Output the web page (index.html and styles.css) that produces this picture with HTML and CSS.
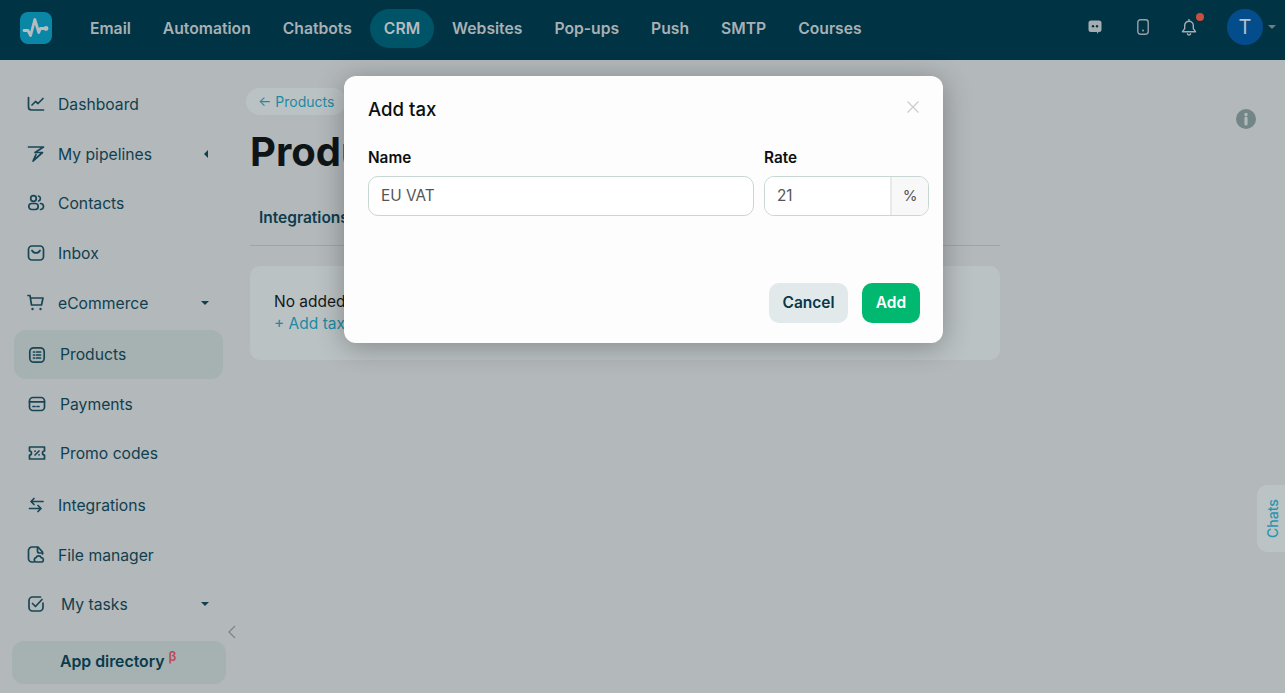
FILE: index.html
```html
<!DOCTYPE html>
<html lang="en">
<head>
<meta charset="utf-8">
<title>Products - Add tax</title>
<link rel="stylesheet" href="styles.css">
</head>
<body>
<header class="topbar">
  <a class="logo" href="#">
    <svg viewBox="0 0 32 32" width="32" height="32"><path d="M4 18.5h4l2.600 5 4.200-16 4 13 1.600-4h5.600" fill="none" stroke="#b4bcc0" stroke-width="2.800" stroke-linecap="round" stroke-linejoin="round"/><circle cx="26" cy="16.500" r="2.400" fill="#b4bcc0"/></svg>
  </a>
  <nav class="topnav">
    <a href="#">Email</a>
    <a href="#">Automation</a>
    <a href="#">Chatbots</a>
    <a href="#" class="current">CRM</a>
    <a href="#">Websites</a>
    <a href="#">Pop-ups</a>
    <a href="#">Push</a>
    <a href="#">SMTP</a>
    <a href="#">Courses</a>
  </nav>
  <div class="topicons">
    <svg class="ico-chat" viewBox="0 0 14 15" width="14" height="15"><path d="M3 0.5h8a2.5 2.5 0 0 1 2.5 2.5v6.5a2.5 2.5 0 0 1-2.5 2.5h-0.500l-1.500 2v-2h-6a2.500 2.500 0 0 1-2.500-2.500v-6.500a2.500 2.500 0 0 1 2.500-2.500z" fill="#a5adb1"/><circle cx="5" cy="6.200" r="1.200" fill="#003344"/><circle cx="9" cy="6.200" r="1.200" fill="#003344"/></svg>
    <svg class="ico-phone" viewBox="0 0 12 16" width="12" height="16"><rect x="0.800" y="0.800" width="10.400" height="14.400" rx="2.600" fill="none" stroke="#97a3a8" stroke-width="1.400"/><circle cx="6" cy="11.600" r="1" fill="#97a3a8"/></svg>
    <span class="bell">
      <svg viewBox="0 0 16 17" width="16" height="17"><path d="M8 2.200a4.300 4.300 0 0 0-4.300 4.300v3.200l-2.200 3h13l-2.200-3v-3.200a4.300 4.300 0 0 0-4.300-4.300zM8 0.600v1.600M6.400 14.800a1.700 1.700 0 0 0 3.200 0" fill="none" stroke="#a5adb1" stroke-width="1.400" stroke-linejoin="round" stroke-linecap="round"/></svg>
      <i class="dot"></i>
    </span>
    <span class="avatar">T</span>
    <i class="caret-grey"></i>
  </div>
</header>

<div class="page">
  <aside class="sidebar">
    <a class="side-item" href="#">
      <svg viewBox="0 0 18 18" width="18" height="18"><path d="M1.500 2.500v9.500a3 3 0 0 0 3 3h12M5 10l3.500-3.500 2.500 2 5-5" /></svg>
      <span>Dashboard</span>
    </a>
    <a class="side-item" href="#">
      <svg viewBox="0 0 18 18" width="18" height="18"><path d="M1.500 2h15l-8.500 5.500h7.500l-9.500 8.500 3-6.500" /></svg>
      <span>My pipelines</span>
      <i class="caret-left"></i>
    </a>
    <a class="side-item up" href="#">
      <svg viewBox="0 0 18 18" width="18" height="18"><circle cx="6.500" cy="4.500" r="2.800"/><rect x="1.800" y="9.500" width="9.400" height="6" rx="3"/><path d="M11.500 2a2.600 2.600 0 0 1 0 5M13.500 9.500a3 3 0 0 1 0 6" /></svg>
      <span>Contacts</span>
    </a>
    <a class="side-item" href="#">
      <svg viewBox="0 0 18 18" width="18" height="18"><rect x="1.500" y="2" width="15" height="14" rx="3.500"/><path d="M5 6.500a4.500 4.500 0 0 0 8 0" /></svg>
      <span>Inbox</span>
    </a>
    <a class="side-item" href="#">
      <svg viewBox="0 0 18 18" width="18" height="18"><path d="M1 1.500h2l1.500 9.500h10l1.500-7h-12.500" /><circle cx="5.500" cy="15" r="1.200" fill="#184656" stroke="none"/><circle cx="13.500" cy="15" r="1.200" fill="#184656" stroke="none"/></svg>
      <span>eCommerce</span>
      <i class="caret-down"></i>
    </a>
    <a class="side-item sub active" href="#">
      <svg viewBox="0 0 18 18" width="18" height="18"><rect x="1.800" y="1.800" width="14.400" height="14.400" rx="4"/><path d="M5.500 6h1M8.500 6h4M5.500 9h1M8.500 9h4M5.500 12h1M8.500 12h4" /></svg>
      <span>Products</span>
    </a>
    <a class="side-item sub" href="#">
      <svg viewBox="0 0 18 18" width="18" height="18"><rect x="1.500" y="2.500" width="15" height="13" rx="3.500"/><path d="M1.500 6.800h15M5 11.500h2M9 11.500h2" /></svg>
      <span>Payments</span>
    </a>
    <a class="side-item sub up" href="#">
      <svg viewBox="0 0 18 18" width="18" height="18"><path d="M1.500 3h15v4a2 2 0 0 0 0 4v4h-15v-4a2 2 0 0 0 0-4z" stroke-linejoin="round"/><path d="M11 7l-4 4M7 7.200h.1M11 10.800h.1" /></svg>
      <span>Promo codes</span>
    </a>
    <a class="side-item down" href="#">
      <svg viewBox="0 0 18 18" width="18" height="18"><path d="M16 5.500h-11M7 2.500l-3 3 3 3M2.500 12.500h11M11 9.500l3 3-3 3" /></svg>
      <span>Integrations</span>
    </a>
    <a class="side-item" href="#">
      <svg viewBox="0 0 18 18" width="18" height="18"><path d="M7 16h-2a3.500 3.500 0 0 1-3.500-3.500v-8a3.500 3.500 0 0 1 3.500-3.500h6l4.500 5v2" /><path d="M10.500 1.500v3.500a2 2 0 0 0 2 2h3" /><path d="M9 16a2.200 2.200 0 0 1 0-4.300 2.800 2.800 0 0 1 5.300 0 2.200 2.200 0 0 1 .5 4.300z" /></svg>
      <span>File manager</span>
    </a>
    <a class="side-item tasks up" href="#">
      <svg viewBox="0 0 18 18" width="18" height="18"><path d="M16 8v4.500a3.500 3.500 0 0 1-3.500 3.500h-7a3.500 3.500 0 0 1-3.500-3.500v-7a3.500 3.500 0 0 1 3.500-3.500h8" /><path d="M5.500 8.500l3 3 6.500-7" /></svg>
      <span>My tasks</span>
      <i class="caret-down"></i>
    </a>
    <a class="app-dir" href="#">App directory <sup>β</sup></a>
    <svg class="collapse" viewBox="0 0 8 14" width="8" height="14"><path d="M7 1l-6 6 6 6" fill="none" stroke="#7d8689" stroke-width="1.300"/></svg>
  </aside>

  <main class="content">
    <a class="back" href="#">← Products</a>
    <h1>Products</h1>
    <div class="tabs"><a href="#">Integrations</a></div>
    <section class="card">
      <p>No added taxes</p>
      <a href="#">+ Add tax</a>
    </section>
  </main>

  <svg class="info" viewBox="0 0 20 20" width="20" height="20"><circle cx="10" cy="10" r="10" fill="#728688"/><circle cx="10" cy="5.500" r="1.700" fill="#b3b8bb"/><path d="M10 9v6" stroke="#b3b8bb" stroke-width="3.200" stroke-linecap="round"/></svg>
  <a class="chats" href="#">Chats</a>
</div>

<div class="modal">
  <div class="modal-head">
    <h2>Add tax</h2>
    <svg viewBox="0 0 12 12" width="12" height="12"><path d="M0.500 0.500l11 11M11.500 0.500l-11 11" stroke="#c9cdce" stroke-width="1.200"/></svg>
  </div>
  <div class="fields">
    <label class="field field-name">
      <span>Name</span>
      <input type="text" value="EU VAT">
    </label>
    <label class="field field-rate">
      <span>Rate</span>
      <span class="input-group">
        <input type="text" value="21">
        <b>%</b>
      </span>
    </label>
  </div>
  <div class="modal-foot">
    <button class="btn btn-cancel">Cancel</button>
    <button class="btn btn-add">Add</button>
  </div>
</div>
</body>
</html>
```
FILE: styles.css
```css
* { box-sizing: border-box; padding: 0; margin: 0; }
html, body { height: 100%; }
body { background: #b3b8bb; font: 15px "Inter", "Liberation Sans", sans-serif; color: #103f4f; overflow: hidden; }
a { color: inherit; text-decoration: none; }
svg { display: block; flex: none; }

.topbar { height: 60px; background: #003344; display: flex; align-items: center; padding-left: 20px; }
.logo { width: 32px; height: 32px; border-radius: 8px; background: #0a86a6; margin-top: -4px; }
.topnav { display: flex; gap: 4px; margin-left: 24px; margin-top: -3px; }
.topnav a { height: 39px; line-height: 39px; padding: 0 14px; border-radius: 20px; color: #a9b0b4; font-size: 15.700px; font-weight: 600; }
.topnav a.current { background: #005468; color: #b4bcc0; }
.topicons { margin-left: auto; display: flex; align-items: center; margin-top: -6px; position: relative; width: 197px; height: 36px; }
.ico-phone { margin-left: 35px; }
.bell { margin-left: 32px; position: relative; }
.bell .dot { position: absolute; top: -6px; right: -7px; width: 8px; height: 8px; border-radius: 50%; background: #c9503f; }
.avatar { margin-left: 30px; width: 36px; height: 36px; border-radius: 50%; background: #044d8c; color: #b5c0ca; font-size: 20px; line-height: 36px; text-align: center; flex: none; }
.caret-grey { margin-left: 5px; border: 4px solid transparent; border-top-color: #6d7d84; border-bottom: 0; }

.page { display: flex; height: 633px; }
.sidebar { width: 250px; flex: none; position: relative; padding: 19px 0 0 14px; }
.side-item { display: flex; align-items: center; width: 209px; height: 50px; padding-left: 13px; border-radius: 12px; font-size: 15.700px; color: #103f4f; }
.side-item svg { fill: none; stroke: #184656; stroke-width: 1.700; stroke-linecap: round; stroke-linejoin: round; }
.side-item span { margin-left: 13px; }
.side-item.up { margin-top: -1px; }
.side-item.down { margin-top: 2px; }
.side-item.sub { padding-left: 14px; }
.side-item.sub span { margin-left: 14px; }
.side-item.tasks span { margin-left: 16px; }
.side-item.active { background: #a6b1b1; height: 49px; margin-top: 2px; }
.caret-left, .caret-down { margin-left: auto; }
.caret-left { margin-right: 15px; border: 4px solid transparent; border-right-color: #103f4f; border-left: 0; }
.caret-down { margin-right: 14px; border: 4px solid transparent; border-top-color: #103f4f; border-bottom: 0; }
.app-dir { display: block; width: 214px; height: 43px; margin: 12px 0 0 -2px; padding-left: 48px; line-height: 42px; border-radius: 12px; background: #a6b1b1; font-weight: 600; font-size: 15.800px; color: #0b3a4a; }
.app-dir sup { color: #b84a55; font-size: 13px; font-weight: 600; line-height: 0; vertical-align: 6px; }
.collapse { position: absolute; left: 228px; top: 565px; }

.content { width: 750px; flex: none; padding-top: 28px; }
.back { display: inline-block; margin-left: -4px; height: 27px; line-height: 27px; padding: 0 12px; border-radius: 14px; background: #bbc2c3; color: #1b8aa3; font-size: 14px; }
h1 { font-size: 40px; font-weight: 700; color: #0f1517; line-height: 48px; margin-top: 13px; }
.tabs { height: 59px; margin-top: 11px; padding: 21px 0 0 9px; border-bottom: 1px solid #9ea5a8; font-weight: 600; font-size: 15.500px; color: #0d3c4c; }
.card { margin-top: 20px; height: 94px; padding: 25px 24px; border-radius: 10px; background: #bbc2c3; color: #14181a; font-size: 15.500px; line-height: 22px; }
.card a { color: #1b8aa3; }

.info { position: absolute; left: 1236px; top: 109px; }
.chats { position: absolute; right: 0; top: 485px; width: 28px; height: 67px; background: #bcc3c5; color: #2a95b0; font-size: 14px; font-weight: 500; writing-mode: vertical-rl; transform: rotate(180deg); border-radius: 0 10px 10px 0; text-align: center; line-height: 32px; }

.modal { position: absolute; left: 344px; top: 76px; width: 599px; height: 267px; padding: 24px; border-radius: 12px; background: #fdfdfd; box-shadow: 0 4px 28px rgba(0, 0, 0, .3); }
.modal-head { display: flex; justify-content: space-between; align-items: center; height: 18px; }
.modal-head h2 { font-size: 18.600px; font-weight: 500; color: #0c0f10; line-height: 20px; }
.modal-head svg { margin: -4px 0 0 0; }
.fields { display: flex; gap: 10px; margin: 31px -14px 0 0; }
.field { display: block; }
.field > span:first-child { display: block; font-weight: 600; font-size: 15.300px; color: #0c0f10; line-height: 18px; margin-bottom: 9px; }
.field-name { width: 386px; }
.field-rate { width: 165px; }
input { width: 100%; height: 40px; padding: 0 12px 2px; border: 1px solid #c8d6d4; border-radius: 10px; background: #fff; font: 15.300px "Inter", "Liberation Sans", sans-serif; color: #555; outline: 0; }
.input-group { display: flex; height: 40px; border: 1px solid #c8d6d4; border-radius: 10px; overflow: hidden; background: #fff; }
.input-group input { flex: 1; min-width: 0; height: 38px; border: 0; border-radius: 0; }
.input-group b { width: 38px; flex: none; border-left: 2px solid #e6eaea; background: #f8f8f8; text-align: center; line-height: 38px; font-weight: 400; color: #555; }
.modal-foot { display: flex; justify-content: flex-end; gap: 14px; margin: 67px -1px 0 0; }
.btn { height: 40px; padding-bottom: 2px; border: 0; border-radius: 10px; font: 600 15.500px "Inter", "Liberation Sans", sans-serif; }
.btn-cancel { width: 79px; background: #e1e9eb; color: #07384a; }
.btn-add { width: 58px; background: #00b870; color: #fff; }
```
